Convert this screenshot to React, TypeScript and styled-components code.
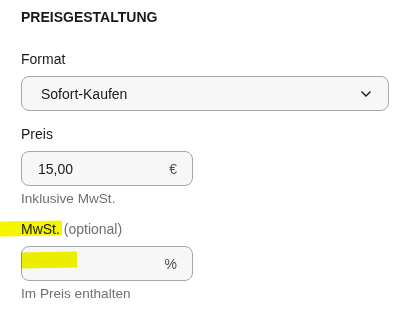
import React from "react";
import styled, { createGlobalStyle } from "styled-components";

const Global = createGlobalStyle`
  html, body { margin: 0; padding: 0; background: #ffffff; }
  body { font-family: "Liberation Sans", Arial, sans-serif; color: #191919; }
`;

const Page = styled.div`
  position: relative;
  width: 400px;
  height: 314px;
  padding: 9px 11px 0 21px;
  box-sizing: border-box;
  display: flex;
  flex-direction: column;
`;

const Title = styled.h2`
  margin: 0;
  font-size: 14px;
  font-weight: 700;
  line-height: 16px;
`;

const Field = styled.div<{ $top: number }>`
  display: flex;
  flex-direction: column;
  margin-top: ${(p) => p.$top}px;
`;

const Label = styled.label`
  font-size: 14px;
  line-height: 16px;
  color: #191919;
`;

const Optional = styled.span`
  color: #707070;
`;

const Box = styled.div<{ $width: number; $padLeft: number; $padRight: number }>`
  margin-top: 9px;
  width: ${(p) => p.$width}px;
  height: 35px;
  box-sizing: border-box;
  border: 1px solid #a8a8a8;
  border-radius: 8px;
  background: #f7f7f7;
  display: flex;
  align-items: center;
  justify-content: space-between;
  padding: 0 ${(p) => p.$padRight}px 0 ${(p) => p.$padLeft}px;
  font-size: 14px;
`;

const Value = styled.span`
  color: #191919;
`;

const Suffix = styled.span`
  color: #505050;
`;

const Help = styled.div`
  margin-top: 5px;
  font-size: 13.6px;
  line-height: 16px;
  color: #707070;
`;

const Marker = styled.div<{ $x: number; $y: number; $w: number; $h: number }>`
  position: absolute;
  left: ${(p) => p.$x}px;
  top: ${(p) => p.$y}px;
  width: ${(p) => p.$w}px;
  height: ${(p) => p.$h}px;
  background: #f5f500;
  mix-blend-mode: multiply;
  transform: skewY(-1deg);
`;

const Chevron = () => (
  <svg width="10" height="6" viewBox="0 0 10 6" fill="none">
    <path d="M1 1 L5 5 L9 1" stroke="#191919" strokeWidth="1.4" strokeLinecap="square" strokeLinejoin="miter" />
  </svg>
);

export default function App() {
  return (
    <>
      <Global />
      <Page>
        <Title>PREISGESTALTUNG</Title>
        <Field $top={26}>
          <Label>Format</Label>
          <Box $width={368} $padLeft={19} $padRight={17}>
            <Value>Sofort-Kaufen</Value>
            <Chevron />
          </Box>
        </Field>
        <Field $top={15}>
          <Label>Preis</Label>
          <Box $width={172} $padLeft={16} $padRight={15}>
            <Value>15,00</Value>
            <Suffix>€</Suffix>
          </Box>
          <Help>Inklusive MwSt.</Help>
        </Field>
        <Field $top={14}>
          <Label>
            MwSt. <Optional>(optional)</Optional>
          </Label>
          <Box $width={172} $padLeft={16} $padRight={15}>
            <Value />
            <Suffix>%</Suffix>
          </Box>
          <Help>Im Preis enthalten</Help>
        </Field>
        <Marker $x={0} $y={221} $w={62} $h={15} />
        <Marker $x={21} $y={252} $w={56} $h={16} />
      </Page>
    </>
  );
}
